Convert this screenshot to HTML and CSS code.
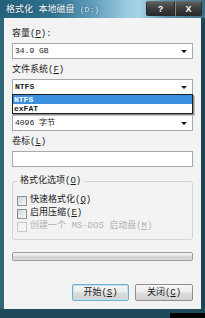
FILE: index.html
```html
<!DOCTYPE html>
<html lang="zh-CN">
<head>
<meta charset="utf-8">
<title>格式化 本地磁盘 (D:)</title>
<link rel="stylesheet" href="styles.css">
</head>
<body>
<div class="window">
  <div class="titlebar">
    <span class="title">格式化 本地磁盘 <span class="drive">(D:)</span></span>
    <div class="caption-btns">
      <span class="cbtn help">?</span>
      <span class="cbtn close">X</span>
    </div>
  </div>
  <div class="client">
    <div class="field">
      <div class="label">容量(<u>P</u>):</div>
      <div class="combo"><span class="value">34.9 GB</span><span class="arrow"></span></div>
    </div>
    <div class="field">
      <div class="label">文件系统(<u>F</u>)</div>
      <div class="combo open"><span class="value bold">NTFS</span><span class="arrow"></span>
        <div class="dropdown">
          <div class="opt selected">NTFS</div>
          <div class="opt">exFAT</div>
        </div>
      </div>
    </div>
    <div class="field">
      <div class="label"></div>
      <div class="combo"><span class="value">4096 字节</span><span class="arrow"></span></div>
    </div>
    <div class="field">
      <div class="label">卷标(<u>L</u>)</div>
      <div class="textbox"></div>
    </div>
    <fieldset class="group">
      <legend>格式化选项(<u>O</u>)</legend>
      <div class="check"><span class="box"></span><span>快速格式化(<u>Q</u>)</span></div>
      <div class="check"><span class="box"></span><span>启用压缩(<u>E</u>)</span></div>
      <div class="check disabled"><span class="box"></span><span>创建一个 MS-DOS 启动盘(<u>M</u>)</span></div>
    </fieldset>
    <div class="progress"></div>
    <div class="actions">
      <span class="btn default">开始(<u>S</u>)</span>
      <span class="btn">关闭(<u>C</u>)</span>
    </div>
  </div>
  <div class="frame-bottom"><span class="corner"></span></div>
</div>
</body>
</html>
```
FILE: styles.css
```css
html, body {
  margin: 0;
  padding: 0;
  background: #000;
}
body {
  width: 205px;
  height: 318px;
  overflow: hidden;
  font-family: "Liberation Mono", "Noto Sans CJK SC", monospace;
  font-size: 9px;
  color: #1a1a1a;
}
u { text-decoration: underline; text-underline-offset: 1px; }

.window {
  width: 205px;
  height: 318px;
  display: flex;
  flex-direction: column;
  background: linear-gradient(to right, #2f6678, #245566 50%, #1d4655);
}

.titlebar {
  height: 18px;
  flex: none;
  display: flex;
  justify-content: space-between;
  align-items: flex-start;
  background: linear-gradient(to right, #23607a 0%, #2f7290 25%, #5f9dba 45%, #9ccbe0 62%, #a9d3e6 68%, #5c95b0 80%, #3c6f86 100%);
}
.title {
  color: #fff;
  padding: 4px 0 0 6px;
  line-height: 11px;
  font-size: 9px;
  text-shadow: 0 0 2px rgba(20, 50, 70, 0.8);
  white-space: nowrap;
}
.title .drive { color: #dfeef5; font-size: 8px; }
.caption-btns {
  display: flex;
  margin: 1px 3px 0 0;
}
.cbtn {
  height: 13px;
  display: flex;
  align-items: center;
  justify-content: center;
  color: #fff;
  font-family: "Liberation Sans", sans-serif;
  font-weight: bold;
  font-size: 9px;
  border: 1px solid #2a2a2a;
  border-top-color: #6b6b6b;
  background: linear-gradient(#5d5d5d, #3c3c3c 50%, #2b2b2b);
}
.cbtn.help { width: 27px; border-radius: 2px 0 0 2px; }
.cbtn.close { width: 25px; border-left: 1px solid #888; border-radius: 0 2px 2px 0; }

.client {
  flex: 1;
  margin: 0 4px;
  background: #f3f3f3;
  padding: 10px 8px 8px 8px;
  display: flex;
  flex-direction: column;
}

.field { display: flex; flex-direction: column; margin-bottom: 5px; }
.field:nth-child(4) { margin-bottom: 8px; }
.label { line-height: 12px; height: 12px; margin-bottom: 3px; white-space: nowrap; }

.combo {
  position: relative;
  height: 16px;
  box-sizing: border-box;
  border: 1px solid #a2a9b1;
  background: #fff;
  display: flex;
  align-items: center;
  justify-content: space-between;
  padding: 0 5px 0 2px;
  font-size: 8px;
}
.value { line-height: 12px; white-space: nowrap; }
.bold { font-weight: bold; }
.arrow {
  width: 0;
  height: 0;
  border-left: 3px solid transparent;
  border-right: 3px solid transparent;
  border-top: 3px solid #111;
  margin-top: 1px;
}
.dropdown {
  position: absolute;
  left: -1px;
  right: -1px;
  top: 100%;
  border: 1px solid #1f1f1f;
  background: #fff;
  box-shadow: 1px 1px 0 #8a8a8a, 2px 2px 0 #c4c4c4;
  z-index: 2;
}
.opt {
  height: 9px;
  line-height: 9px;
  padding-left: 1px;
  font-weight: bold;
  font-size: 8px;
}
.opt.selected { background: #3a8fdf; color: #fff; }

.textbox {
  height: 16px;
  box-sizing: border-box;
  border: 1px solid #a2a9b1;
  background: #fff;
}

.group {
  margin: 0;
  border: 1px solid #cfd6dc;
  border-radius: 3px;
  padding: 7px 4px 6px 4px;
  min-inline-size: 0;
}
.group legend {
  padding: 0 3px;
  line-height: 12px;
  font-size: 9px;
}
.check {
  height: 13px;
  display: flex;
  align-items: center;
  gap: 3px;
  white-space: nowrap;
  line-height: 13px;
}
.box {
  width: 10px;
  height: 10px;
  box-sizing: border-box;
  border: 1px solid #8d9094;
  background: linear-gradient(135deg, #d6d6d6, #f6f6f6);
  flex: none;
}
.check.disabled { color: #b0b0b0; }
.check.disabled .box { border-color: #c9c9c9; background: #f4f4f4; }

.progress {
  margin-top: 12px;
  height: 9px;
  box-sizing: border-box;
  border: 1px solid #9c9c9c;
  border-radius: 2px;
  background: linear-gradient(#f4f4f4, #e2e2e2 45%, #cfcfcf 55%, #dedede);
}

.actions {
  margin-top: auto;
  display: flex;
  justify-content: flex-end;
  gap: 6px;
}
.btn {
  width: 58px;
  height: 17px;
  box-sizing: border-box;
  display: flex;
  align-items: center;
  justify-content: center;
  border: 1px solid #8f8f8f;
  border-radius: 2px;
  background: linear-gradient(#f7f7f7, #ebebeb 48%, #dcdcdc 52%, #d2d2d2);
  line-height: 12px;
  white-space: nowrap;
}
.btn.default {
  width: 57px;
  border-color: #6fb0cc;
  box-shadow: inset 0 0 0 1px #bfe3f1;
}

.frame-bottom {
  height: 9px;
  flex: none;
  display: flex;
  justify-content: flex-end;
  align-items: flex-end;
  background: #1f4a5a;
}
.corner {
  width: 35px;
  height: 5px;
  background: #000;
}
```
